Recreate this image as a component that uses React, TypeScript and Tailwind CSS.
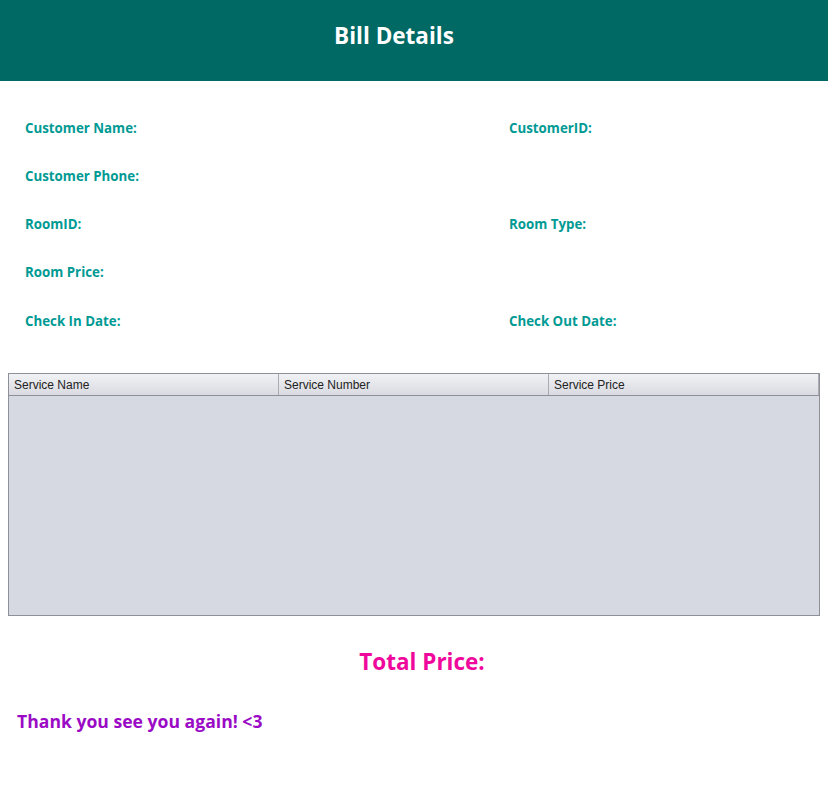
const font = { fontFamily: '"Open Sans", "Noto Sans", sans-serif' };

const Label = ({ text, h }: { text: string; h: string }) => (
  <div className={`${h} flex items-center text-[13.3px] font-bold text-[#009a94]`}>{text}</div>
);

export default function App() {
  const rows: [string, string, string][] = [
    ["Customer Name:", "CustomerID:", "h-[49px]"],
    ["Customer Phone:", "", "h-[48px]"],
    ["RoomID:", "Room Type:", "h-[47px]"],
    ["Room Price:", "", "h-[50px]"],
    ["Check In Date:", "Check Out Date:", "h-[48px]"],
  ];

  return (
    <div className="w-[828px] h-[789px] bg-white" style={font}>
      {/* Header */}
      <div className="h-[81px] bg-[#006964] flex items-center justify-center">
        <h1 className="text-[22.5px] font-bold text-white -mt-[10px] -ml-[40px]">Bill Details</h1>
      </div>

      {/* Customer info */}
      <div className="pt-[23px] px-[25px] grid grid-cols-[484px_1fr]">
        {rows.map(([l, r, h], i) => (
          <div key={i} className="contents">
            <Label text={l} h={h} />
            <Label text={r} h={h} />
          </div>
        ))}
      </div>

      {/* Services table */}
      <div className="mt-[27px] mx-[8px] h-[243px] border border-[#8d9098] bg-[#d6d9e1] flex flex-col">
        <div
          className="h-[22px] flex border-b border-[#8d9098] text-[12px] text-[#222]"
          style={{ fontFamily: '"Liberation Sans", Arial, sans-serif' }}
        >
          {["Service Name", "Service Number", "Service Price"].map((c) => (
            <div
              key={c}
              className="w-[270px] px-[5px] pt-[1px] flex items-center bg-gradient-to-b from-[#f1f2f5] to-[#d9dbe1] border-r border-[#a9acb3]"
            >
              {c}
            </div>
          ))}
        </div>
      </div>

      {/* Total */}
      <div className="mt-[29px] pl-[16px] text-center text-[22.5px] font-bold text-[#f0079b]">Total Price:</div>

      <div className="mt-[29px] pl-[17px] text-[17.6px] font-bold text-[#9b0bc6]">Thank you see you again! &lt;3</div>
    </div>
  );
}
